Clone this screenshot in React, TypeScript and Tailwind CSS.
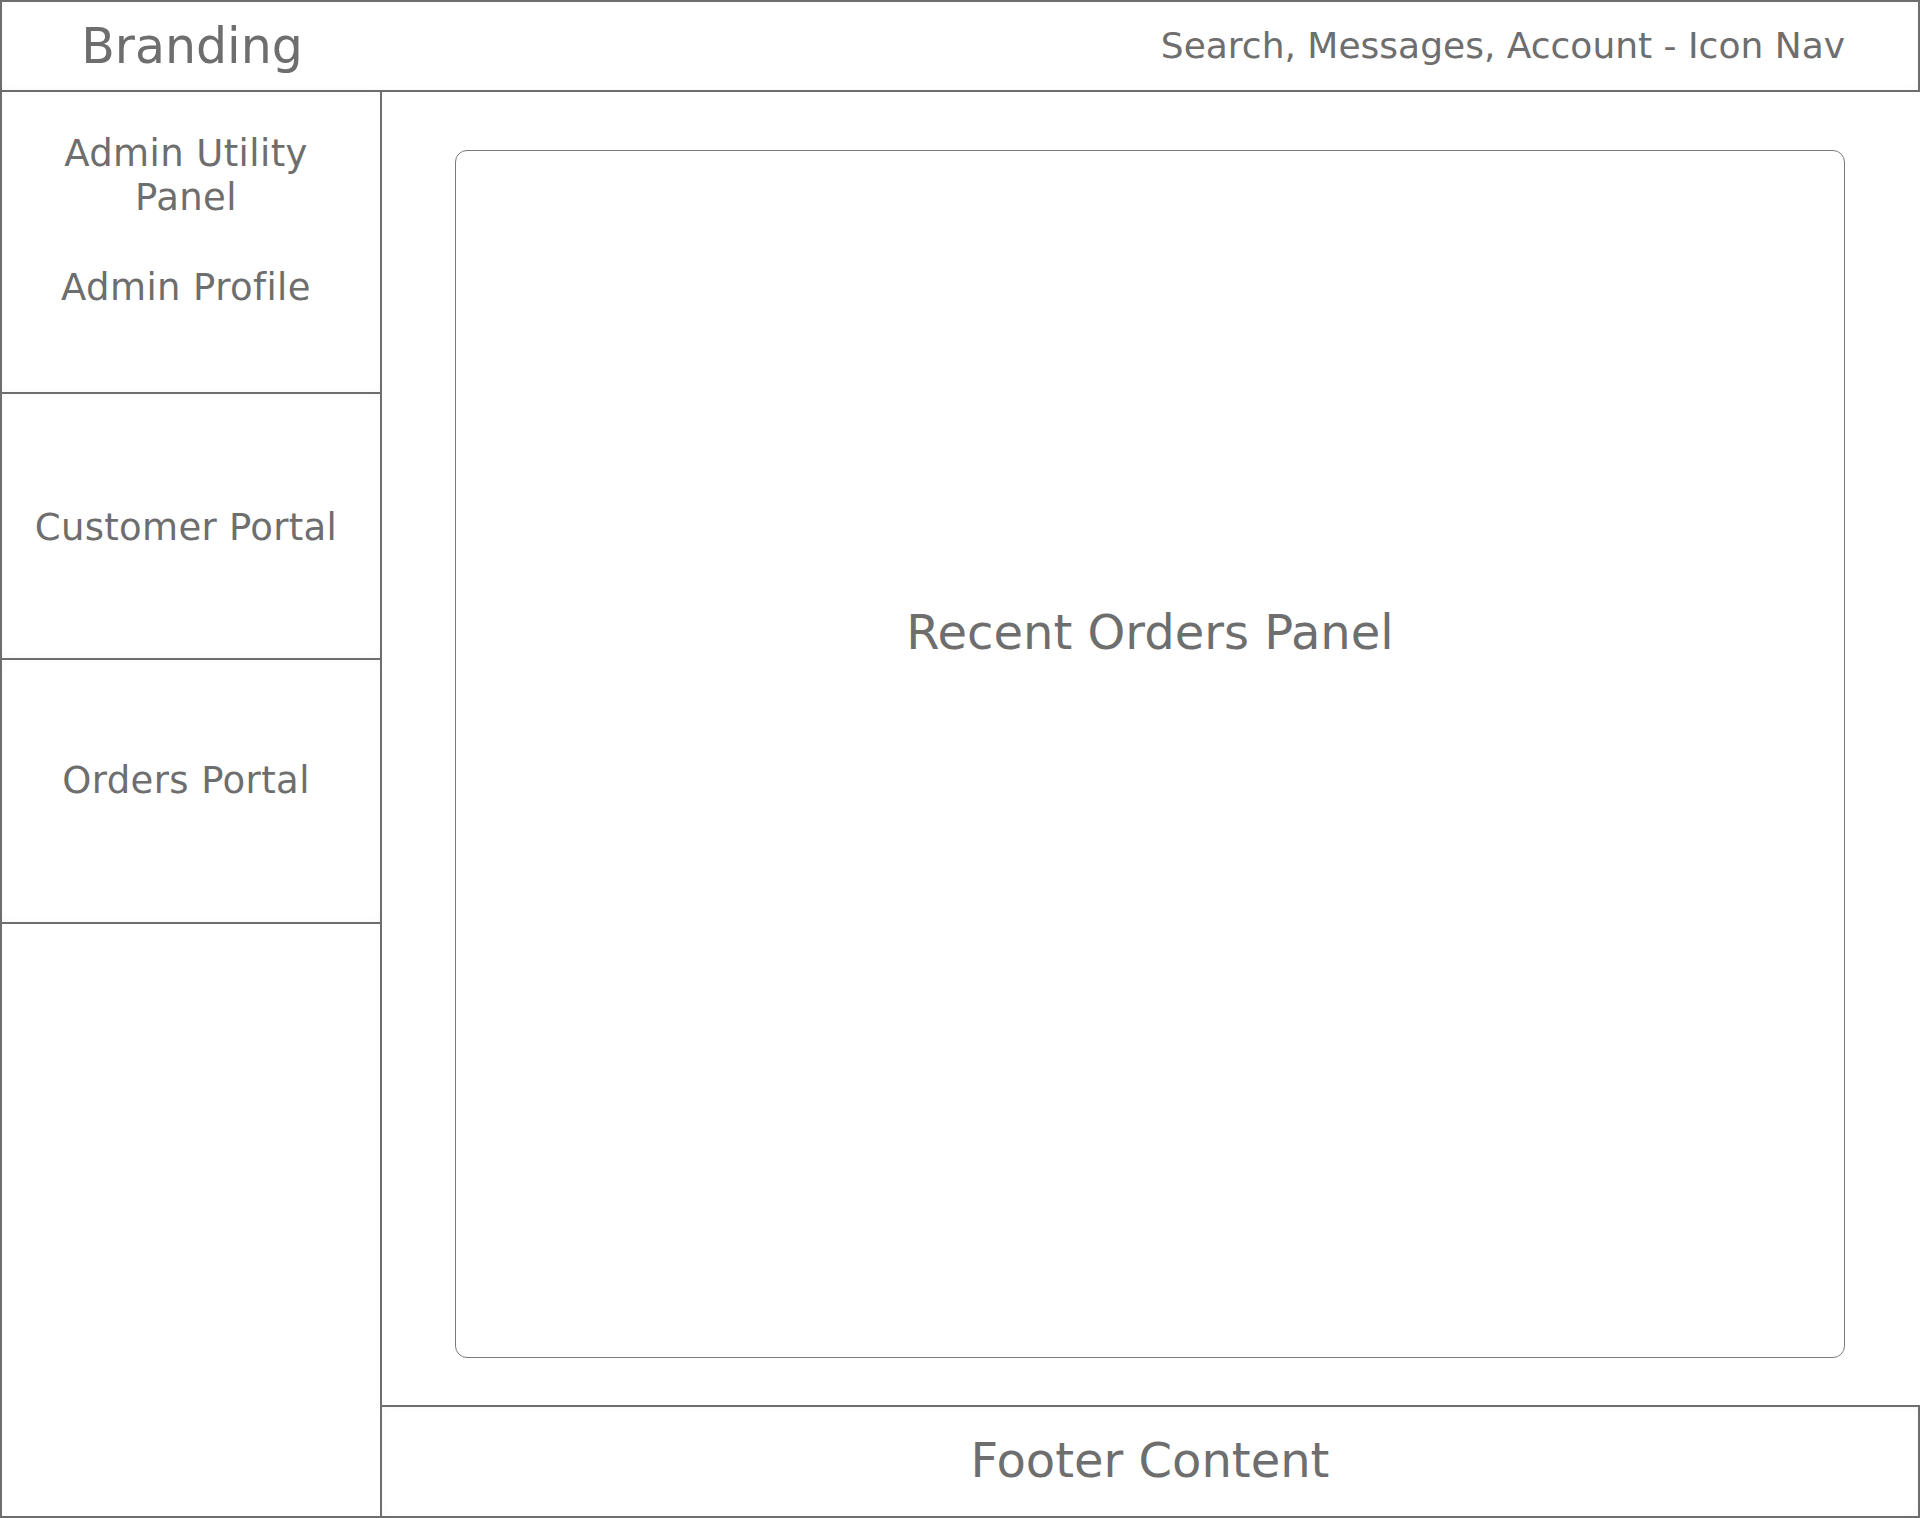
import React from "react";

export default function App() {
  return (
    <div className="w-[1920px] h-[1518px] flex flex-col bg-white text-[#6e6e6e] font-['DejaVu_Sans',sans-serif] overflow-hidden">
      <header className="h-[92px] shrink-0 border-2 border-[#6e6e6e] flex items-center shadow-[inset_0_0_8px_rgba(0,0,0,0.03)]">
        <div className="w-[380px] text-center text-[49px] leading-none">Branding</div>
        <div className="ml-auto pr-[73px] text-[36px] leading-none">
          Search, Messages, Account - Icon Nav
        </div>
      </header>
      <div className="flex flex-1 min-h-0 -mt-[2px]">
        <aside className="w-[382px] shrink-0 flex flex-col border-l-2 border-r-2 border-b-2 border-[#6e6e6e]">
          <div className="h-[304px] shrink-0 border-b-2 border-[#6e6e6e] pt-[42px] pr-[10px] flex flex-col items-center text-[37px] tracking-[0.4px] leading-[44px] shadow-[inset_0_0_8px_rgba(0,0,0,0.03)]">
            <div className="text-center">Admin Utility</div>
            <div className="text-center">Panel</div>
            <div className="text-center mt-[46px]">Admin Profile</div>
          </div>
          <div className="h-[266px] shrink-0 border-b-2 border-[#6e6e6e] pr-[10px] pt-[4px] flex items-center justify-center text-[37px] tracking-[0.3px] leading-[44px] shadow-[inset_0_0_8px_rgba(0,0,0,0.03)]">
            Customer Portal
          </div>
          <div className="h-[264px] shrink-0 border-b-2 border-[#6e6e6e] pr-[10px] pb-[20px] flex items-center justify-center text-[37px] tracking-[0.4px] leading-[44px] shadow-[inset_0_0_8px_rgba(0,0,0,0.03)]">
            Orders Portal
          </div>
          <div className="flex-1" />
        </aside>
        <div className="flex-1 flex flex-col -ml-[2px] min-w-0">
          <main className="flex-1 min-h-0 border-l-2 border-t-2 border-[#6e6e6e] pt-[58px] pl-[73px] pr-[75px] pb-[47px]">
            <div className="h-full border border-[#7a7a7a] rounded-[12px] flex justify-center pt-[453px] text-[48px] leading-[56px]">
              Recent Orders Panel
            </div>
          </main>
          <footer className="h-[113px] shrink-0 border-2 border-[#6e6e6e] pb-[4px] flex items-center justify-center text-[48px] leading-none shadow-[inset_0_0_8px_rgba(0,0,0,0.03)]">
            Footer Content
          </footer>
        </div>
      </div>
    </div>
  );
}
